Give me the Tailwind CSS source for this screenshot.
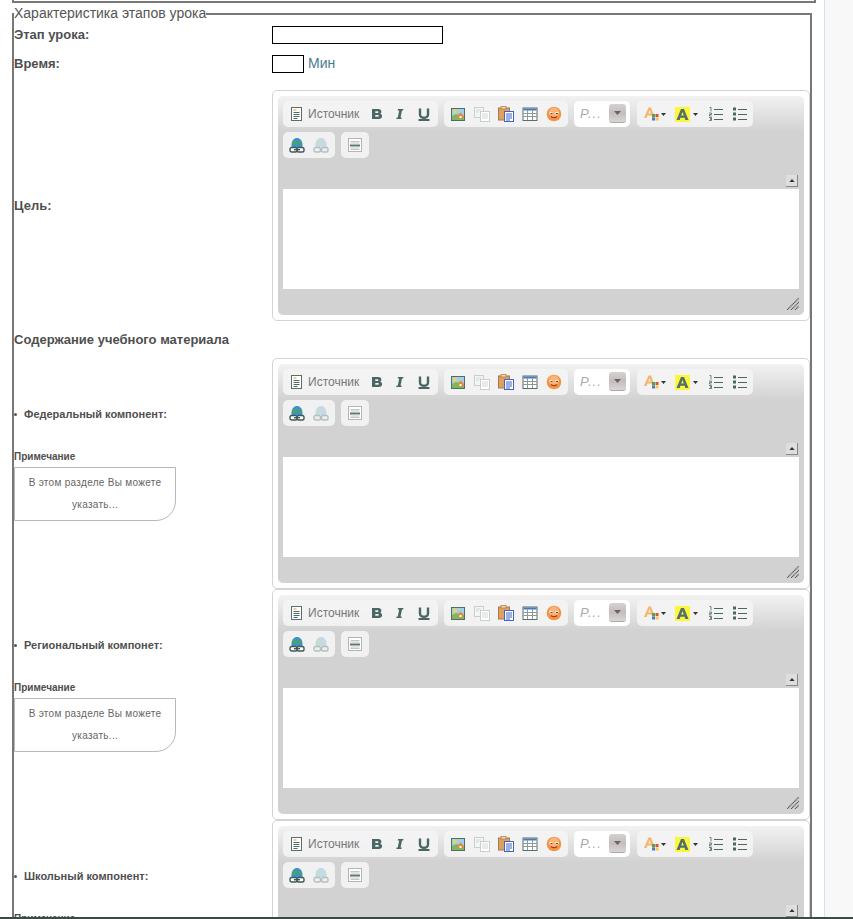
<!DOCTYPE html>
<html><head><meta charset="utf-8">
<script src="https://cdn.jsdelivr.net/npm/@tailwindcss/browser@4"></script>
</head>
<body class="bg-white overflow-hidden h-[919px] font-['Liberation_Sans',Arial,sans-serif] text-[#4f4f4f]">
<svg class="hidden" width="0" height="0">
<defs>
<symbol id="src" viewBox="0 0 16 16"><rect x="2.500" y="1.500" width="10" height="13" fill="#fff" stroke="#5a6e6a"/><path d="M4.500 4h3" stroke="#e8922e"/><path d="M4.500 6.500h6M4.500 8.500h6M4.500 10.500h6M4.500 12.500h4" stroke="#4d6b66"/></symbol>
<symbol id="bold" viewBox="0 0 14 14"><path d="M2 2h6.500c3.300 0 3.600 4 1.700 4.700 2.800 .6 2.700 5.300-1.400 5.300H2zM5.300 4.300v1.700h2.400c1 0 1-1.700 0-1.700zM5.300 8v1.800h2.700c1.200 0 1.200-1.800 0-1.800z" fill="#4a6763" fill-rule="evenodd"/></symbol>
<symbol id="ital" viewBox="0 0 14 14"><path d="M5 2h5.500l-.4 1.400H9L7.500 10.600h1.200L8.400 12H3.300l.3-1.400h1.200L6.200 3.400H4.700z" fill="#4a6763"/></symbol>
<symbol id="under" viewBox="0 0 14 14"><path d="M3 1.500v6c0 4.300 8 4.300 8 0v-6" fill="none" stroke="#4a6763" stroke-width="2.400"/><rect x="1.500" y="12" width="11" height="2" fill="#4a6763"/></symbol>
<symbol id="img" viewBox="0 0 16 16"><rect x="1" y="2" width="14" height="13" fill="#4e6e68"/><rect x="2" y="3" width="12" height="11" fill="#9fd0e8"/><circle cx="5" cy="5.500" r="2" fill="#f7d24a"/><path d="M2 10l4-2 8 2v4H2z" fill="#86b45a"/><path d="M8 9.500l2.500-3 3 3V12H8z" fill="#e8863a"/><rect x="9.500" y="10" width="2" height="2" fill="#fff"/></symbol>
<symbol id="copy" viewBox="0 0 16 16"><rect x=".5" y="1.500" width="9" height="10" fill="#f4f6f4" stroke="#c8cfcc"/><rect x="6.500" y="5.500" width="9" height="10" fill="#fff" stroke="#c8cfcc"/><path d="M2 4h5M2 6h3M8 8h6M8 10h6M8 12h6" stroke="#d2d8d6"/></symbol>
<symbol id="paste" viewBox="0 0 16 16"><rect x=".5" y="2" width="11" height="12" fill="#e0a060" stroke="#a87a4a"/><rect x="3" y=".5" width="5" height="2.500" fill="#f4d8a8" stroke="#a87a4a" stroke-width=".7"/><rect x="6.500" y="5.500" width="9" height="10" fill="#fff" stroke="#3d66c8"/><path d="M8 8h6M8 10h6M8 12h6M8 14h4" stroke="#3d66c8"/></symbol>
<symbol id="table" viewBox="0 0 16 16"><rect x="1" y="2" width="14" height="12.500" fill="#fff" stroke="#5a6e6a"/><rect x="1.500" y="2.500" width="13" height="2" fill="#4a78c0"/><path d="M1 7.500h14M1 10.500h14M5.500 4v10M10.500 4v10" stroke="#8a9a96"/></symbol>
<symbol id="smile" viewBox="0 0 16 16"><circle cx="8" cy="8" r="7.300" fill="#f39543"/><circle cx="8" cy="6.500" r="5" fill="#f8b47a"/><path d="M3.500 7h3M9.500 7h3" stroke="#fff" stroke-width="1.300"/><path d="M4.500 7.500h2M10 7.500h2" stroke="#7a4a20"/><path d="M5 10.500c1.500 1.500 4.500 1.500 6 0" stroke="#b83a1a" fill="none" stroke-width="1.300"/></symbol>
<symbol id="fcolor" viewBox="0 0 18 16"><path d="M1 12L5.500 1.500h2.500L12 12H9.500l-.8-2.400H4.500L3.500 12zM5.300 7.500h2.600L6.700 4z" fill="#f5b56a" fill-rule="evenodd"/><rect x="9" y="8" width="3" height="3" fill="#4aa84a"/><rect x="12.500" y="8" width="3" height="3" fill="#e84a3a"/><rect x="9" y="11.500" width="3" height="3" fill="#4a78d8"/><rect x="12.500" y="11.500" width="3" height="3" fill="#f5c842"/></symbol>
<symbol id="bcolor" viewBox="0 0 15 15"><rect width="15" height="15" fill="#fbf83c"/><path d="M1.500 13L6 2h3l4.500 11h-3.200l-.7-2.300H5.400L4.700 13zM6.200 8.500h2.600L7.500 5z" fill="#566f6b" fill-rule="evenodd"/></symbol>
<symbol id="ol" viewBox="0 0 16 16"><path d="M6 3.500h9M6 8.500h9M6 13.500h9" stroke="#4a6763"/><path d="M1.500 1.500h1.500v4M1 7h2.500v1.500H1.500V10h2M1 11.500h2.500v1.500H2h1.500v1.500H1" fill="none" stroke="#4a6763" stroke-width=".8"/></symbol>
<symbol id="ul" viewBox="0 0 16 16"><path d="M6 3.500h9M6 8.500h9M6 13.500h9" stroke="#4a6763"/><rect x="1" y="1.500" width="3" height="3" fill="#4a6763"/><rect x="1" y="6.500" width="3" height="3" fill="#4a6763"/><rect x="1" y="11.500" width="3" height="3" fill="#4a6763"/></symbol>
<symbol id="link" viewBox="0 0 16 16"><path d="M2.500 10C2 3.500 5 1 8 1s6 2.500 5.500 9z" fill="#3f8fd8"/><path d="M3.500 6c2-3 3.500-3.500 4.500-1.500S7 7.500 6 9zM10 3c2 1 3 3 2.500 5.500L10 7.500z" fill="#4aa84a"/><rect x="1" y="10.500" width="7" height="4.500" rx="1.800" fill="#fff" stroke="#3f5a56" stroke-width="1.400"/><rect x="8" y="10.500" width="7" height="4.500" rx="1.800" fill="#fff" stroke="#3f5a56" stroke-width="1.400"/><path d="M5 12.700h6" stroke="#3f5a56" stroke-width="1.400"/></symbol>
<symbol id="unlink" viewBox="0 0 16 16"><path d="M2.500 10C2 3.500 5 1 8 1s6 2.500 5.500 9z" fill="#c4d8ec"/><path d="M3.500 6c2-3 3.500-3.500 4.500-1.500S7 7.500 6 9zM10 3c2 1 3 3 2.500 5.500L10 7.500z" fill="#c6e0c8"/><rect x="1" y="10.500" width="6.500" height="4.500" rx="1.800" fill="#eee" stroke="#b4c0be" stroke-width="1.400"/><rect x="8.500" y="10.500" width="6.500" height="4.500" rx="1.800" fill="#eee" stroke="#b4c0be" stroke-width="1.400"/></symbol>
<symbol id="hr" viewBox="0 0 16 16"><rect x="1.500" y="1.500" width="13" height="13" fill="#fff" stroke="#b4b4b4"/><path d="M3.500 4.500h9M3.500 6h9M3.500 11h9M3.500 12.500h9" stroke="#c4c4c4"/><rect x="3" y="7.500" width="10" height="2" fill="#5f7773"/></symbol>
<symbol id="arrow" viewBox="0 0 7 4"><path d="M0 0h7L3.500 4z" fill="#333"/></symbol>
<symbol id="arrowg" viewBox="0 0 7 4"><path d="M0 0h7L3.500 4z" fill="#666"/></symbol>
<symbol id="grip" viewBox="0 0 12 12"><path d="M0 12L12 0M4 12L12 4M8 12L12 8" stroke="#555" stroke-width="1.200" stroke-dasharray="1.200 .5"/></symbol>
</defs>
</svg>

<div class="h-[3px] ml-[12px] w-[804px] border-b-2 border-x-2 border-[#777]"></div>
<div class="absolute right-0 top-0 bottom-0 w-[29px] bg-[#f8f8f8] border-l border-[#d5e3ee]"></div>

<fieldset class="relative ml-[12px] w-[799px] border-2 border-[#777] mt-[3px] pl-0 pr-0 h-[1100px]">
<legend class="relative -top-[1px] ml-0 px-0 text-[14px] leading-[16px] text-[#555]">Характеристика этапов урока</legend>

<div class="flex items-center h-[29px] -mt-[2px]">
<div class="w-[258px] text-[13px] font-bold">Этап урока:</div>
<div class="w-[171px] h-[18px] border border-black bg-white"></div>
</div>
<div class="flex items-center h-[29px]">
<div class="w-[258px] text-[13px] font-bold">Время:</div>
<div class="w-[32px] h-[18px] border border-black bg-white"></div>
<span class="ml-[4px] text-[14px] text-[#4a7a90]">Мин</span>
</div>

<div class="flex items-center h-[231px] mt-[12px]">
<div class="w-[258px] text-[13px] font-bold">Цель:</div>
<div class="w-[538px] h-[231px] border border-[#d4d4d4] rounded-[5px] p-[5px] bg-white">
<div class="h-[219px] rounded-[5px] bg-[#d2d2d2] bg-gradient-to-b from-[#f2f2f2] to-[#d2d2d2] bg-[length:100%_36px] bg-no-repeat relative flex flex-col">
<div class="h-[93px] px-[5px] pt-[5px] flex flex-wrap content-start gap-x-[6px] gap-y-[5px]">
<div class="h-[26px] w-[155px] bg-[#f4f4f4]/90 rounded-[5px] flex items-center pl-[6px]">
<svg class="w-[16px] h-[16px]"><use href="#src"/></svg>
<span class="ml-[3px] w-[54px] text-[12px] text-[#777]">Источник</span>
<svg class="ml-[8px] w-[14px] h-[14px]"><use href="#bold"/></svg>
<svg class="ml-[9px] w-[14px] h-[14px]"><use href="#ital"/></svg>
<svg class="ml-[10px] w-[14px] h-[14px]"><use href="#under"/></svg>
</div>
<div class="h-[26px] w-[124px] bg-[#f4f4f4]/90 rounded-[5px] flex items-center pl-[6px] gap-[8px]">
<svg class="w-[16px] h-[16px]"><use href="#img"/></svg><svg class="w-[16px] h-[16px]"><use href="#copy"/></svg><svg class="w-[16px] h-[16px]"><use href="#paste"/></svg><svg class="w-[16px] h-[16px]"><use href="#table"/></svg><svg class="w-[16px] h-[16px]"><use href="#smile"/></svg>
</div>
<div class="h-[26px] w-[56px] bg-white rounded-[5px] flex items-center pl-[6px] relative">
<span class="text-[13px] italic text-[#aaa] tracking-[1px]">P...</span>
<div class="absolute right-[4px] top-[3px] w-[17px] h-[19px] rounded-[3px] bg-gradient-to-b from-[#d6d2d2] via-[#c4bdbd] to-[#dad6d6] border-b border-[#aaa] flex items-center justify-center"><svg class="w-[7px] h-[4px]"><use href="#arrowg"/></svg></div>
</div>
<div class="h-[26px] w-[116px] ml-[1px] bg-[#f4f4f4]/90 rounded-[5px] flex items-center pl-[6px]">
<svg class="w-[18px] h-[16px]"><use href="#fcolor"/></svg>
<svg class="w-[5px] h-[3px]"><use href="#arrow"/></svg>
<svg class="ml-[9px] w-[15px] h-[15px]"><use href="#bcolor"/></svg>
<svg class="ml-[3px] w-[5px] h-[3px]"><use href="#arrow"/></svg>
<svg class="ml-[10px] w-[16px] h-[16px]"><use href="#ol"/></svg>
<svg class="ml-[8px] w-[16px] h-[16px]"><use href="#ul"/></svg>
</div>
<div class="h-[26px] w-[52px] bg-[#f4f4f4]/90 rounded-[5px] flex items-center pl-[6px] gap-[8px]">
<svg class="w-[16px] h-[16px]"><use href="#link"/></svg><svg class="w-[16px] h-[16px]"><use href="#unlink"/></svg>
</div>
<div class="h-[26px] w-[28px] bg-[#f4f4f4]/90 rounded-[5px] flex items-center justify-center">
<svg class="w-[16px] h-[16px]"><use href="#hr"/></svg>
</div>
</div>
<div class="absolute right-[6px] top-[79px] w-[12px] h-[12px] bg-[#dedede] border-r border-b border-[#888] flex items-center justify-center"><svg class="w-[6px] h-[3px] rotate-180"><use href="#arrow"/></svg></div>
<div class="mx-[5px] h-[100px] bg-white"></div>
<svg class="absolute right-[5px] bottom-[5px] w-[12px] h-[12px]"><use href="#grip"/></svg>
</div>
</div>
</div>

<div class="h-[37px] flex items-center text-[13px] font-bold">Содержание учебного материала</div>

<!-- Федеральный -->
<div class="flex h-[231px]">
<div class="w-[258px] pt-[48px]">
<div class="flex items-center h-[16px] text-[11px] font-bold"><span class="w-[3px] h-[3px] rounded-full bg-[#555] mr-[7px]"></span>Федеральный компонент:</div>
<div class="mt-[29px] text-[10px] font-bold leading-[12px]">Примечание</div>
<div class="mt-[4px] w-[162px] h-[54px] border border-[#b8b8b8] rounded-br-[20px] text-center text-[10px] tracking-[0.3px] leading-[22px] pt-[4px] text-[#666]">В этом разделе Вы можете<br>указать...</div>
</div>
<div class="w-[538px] h-[231px] border border-[#d4d4d4] rounded-[5px] p-[5px] bg-white">
<div class="h-[219px] rounded-[5px] bg-[#d2d2d2] bg-gradient-to-b from-[#f2f2f2] to-[#d2d2d2] bg-[length:100%_36px] bg-no-repeat relative flex flex-col">
<div class="h-[93px] px-[5px] pt-[5px] flex flex-wrap content-start gap-x-[6px] gap-y-[5px]">
<div class="h-[26px] w-[155px] bg-[#f4f4f4]/90 rounded-[5px] flex items-center pl-[6px]">
<svg class="w-[16px] h-[16px]"><use href="#src"/></svg>
<span class="ml-[3px] w-[54px] text-[12px] text-[#777]">Источник</span>
<svg class="ml-[8px] w-[14px] h-[14px]"><use href="#bold"/></svg>
<svg class="ml-[9px] w-[14px] h-[14px]"><use href="#ital"/></svg>
<svg class="ml-[10px] w-[14px] h-[14px]"><use href="#under"/></svg>
</div>
<div class="h-[26px] w-[124px] bg-[#f4f4f4]/90 rounded-[5px] flex items-center pl-[6px] gap-[8px]">
<svg class="w-[16px] h-[16px]"><use href="#img"/></svg><svg class="w-[16px] h-[16px]"><use href="#copy"/></svg><svg class="w-[16px] h-[16px]"><use href="#paste"/></svg><svg class="w-[16px] h-[16px]"><use href="#table"/></svg><svg class="w-[16px] h-[16px]"><use href="#smile"/></svg>
</div>
<div class="h-[26px] w-[56px] bg-white rounded-[5px] flex items-center pl-[6px] relative">
<span class="text-[13px] italic text-[#aaa] tracking-[1px]">P...</span>
<div class="absolute right-[4px] top-[3px] w-[17px] h-[19px] rounded-[3px] bg-gradient-to-b from-[#d6d2d2] via-[#c4bdbd] to-[#dad6d6] border-b border-[#aaa] flex items-center justify-center"><svg class="w-[7px] h-[4px]"><use href="#arrowg"/></svg></div>
</div>
<div class="h-[26px] w-[116px] ml-[1px] bg-[#f4f4f4]/90 rounded-[5px] flex items-center pl-[6px]">
<svg class="w-[18px] h-[16px]"><use href="#fcolor"/></svg>
<svg class="w-[5px] h-[3px]"><use href="#arrow"/></svg>
<svg class="ml-[9px] w-[15px] h-[15px]"><use href="#bcolor"/></svg>
<svg class="ml-[3px] w-[5px] h-[3px]"><use href="#arrow"/></svg>
<svg class="ml-[10px] w-[16px] h-[16px]"><use href="#ol"/></svg>
<svg class="ml-[8px] w-[16px] h-[16px]"><use href="#ul"/></svg>
</div>
<div class="h-[26px] w-[52px] bg-[#f4f4f4]/90 rounded-[5px] flex items-center pl-[6px] gap-[8px]">
<svg class="w-[16px] h-[16px]"><use href="#link"/></svg><svg class="w-[16px] h-[16px]"><use href="#unlink"/></svg>
</div>
<div class="h-[26px] w-[28px] bg-[#f4f4f4]/90 rounded-[5px] flex items-center justify-center">
<svg class="w-[16px] h-[16px]"><use href="#hr"/></svg>
</div>
</div>
<div class="absolute right-[6px] top-[79px] w-[12px] h-[12px] bg-[#dedede] border-r border-b border-[#888] flex items-center justify-center"><svg class="w-[6px] h-[3px] rotate-180"><use href="#arrow"/></svg></div>
<div class="mx-[5px] h-[100px] bg-white"></div>
<svg class="absolute right-[5px] bottom-[5px] w-[12px] h-[12px]"><use href="#grip"/></svg>
</div>
</div>
</div>

<!-- Региональный -->
<div class="flex h-[231px]">
<div class="w-[258px] pt-[48px]">
<div class="flex items-center h-[16px] text-[11px] font-bold"><span class="w-[3px] h-[3px] rounded-full bg-[#555] mr-[7px]"></span>Региональный компонет:</div>
<div class="mt-[29px] text-[10px] font-bold leading-[12px]">Примечание</div>
<div class="mt-[4px] w-[162px] h-[54px] border border-[#b8b8b8] rounded-br-[20px] text-center text-[10px] tracking-[0.3px] leading-[22px] pt-[4px] text-[#666]">В этом разделе Вы можете<br>указать...</div>
</div>
<div class="w-[538px] h-[231px] border border-[#d4d4d4] rounded-[5px] p-[5px] bg-white">
<div class="h-[219px] rounded-[5px] bg-[#d2d2d2] bg-gradient-to-b from-[#f2f2f2] to-[#d2d2d2] bg-[length:100%_36px] bg-no-repeat relative flex flex-col">
<div class="h-[93px] px-[5px] pt-[5px] flex flex-wrap content-start gap-x-[6px] gap-y-[5px]">
<div class="h-[26px] w-[155px] bg-[#f4f4f4]/90 rounded-[5px] flex items-center pl-[6px]">
<svg class="w-[16px] h-[16px]"><use href="#src"/></svg>
<span class="ml-[3px] w-[54px] text-[12px] text-[#777]">Источник</span>
<svg class="ml-[8px] w-[14px] h-[14px]"><use href="#bold"/></svg>
<svg class="ml-[9px] w-[14px] h-[14px]"><use href="#ital"/></svg>
<svg class="ml-[10px] w-[14px] h-[14px]"><use href="#under"/></svg>
</div>
<div class="h-[26px] w-[124px] bg-[#f4f4f4]/90 rounded-[5px] flex items-center pl-[6px] gap-[8px]">
<svg class="w-[16px] h-[16px]"><use href="#img"/></svg><svg class="w-[16px] h-[16px]"><use href="#copy"/></svg><svg class="w-[16px] h-[16px]"><use href="#paste"/></svg><svg class="w-[16px] h-[16px]"><use href="#table"/></svg><svg class="w-[16px] h-[16px]"><use href="#smile"/></svg>
</div>
<div class="h-[26px] w-[56px] bg-white rounded-[5px] flex items-center pl-[6px] relative">
<span class="text-[13px] italic text-[#aaa] tracking-[1px]">P...</span>
<div class="absolute right-[4px] top-[3px] w-[17px] h-[19px] rounded-[3px] bg-gradient-to-b from-[#d6d2d2] via-[#c4bdbd] to-[#dad6d6] border-b border-[#aaa] flex items-center justify-center"><svg class="w-[7px] h-[4px]"><use href="#arrowg"/></svg></div>
</div>
<div class="h-[26px] w-[116px] ml-[1px] bg-[#f4f4f4]/90 rounded-[5px] flex items-center pl-[6px]">
<svg class="w-[18px] h-[16px]"><use href="#fcolor"/></svg>
<svg class="w-[5px] h-[3px]"><use href="#arrow"/></svg>
<svg class="ml-[9px] w-[15px] h-[15px]"><use href="#bcolor"/></svg>
<svg class="ml-[3px] w-[5px] h-[3px]"><use href="#arrow"/></svg>
<svg class="ml-[10px] w-[16px] h-[16px]"><use href="#ol"/></svg>
<svg class="ml-[8px] w-[16px] h-[16px]"><use href="#ul"/></svg>
</div>
<div class="h-[26px] w-[52px] bg-[#f4f4f4]/90 rounded-[5px] flex items-center pl-[6px] gap-[8px]">
<svg class="w-[16px] h-[16px]"><use href="#link"/></svg><svg class="w-[16px] h-[16px]"><use href="#unlink"/></svg>
</div>
<div class="h-[26px] w-[28px] bg-[#f4f4f4]/90 rounded-[5px] flex items-center justify-center">
<svg class="w-[16px] h-[16px]"><use href="#hr"/></svg>
</div>
</div>
<div class="absolute right-[6px] top-[79px] w-[12px] h-[12px] bg-[#dedede] border-r border-b border-[#888] flex items-center justify-center"><svg class="w-[6px] h-[3px] rotate-180"><use href="#arrow"/></svg></div>
<div class="mx-[5px] h-[100px] bg-white"></div>
<svg class="absolute right-[5px] bottom-[5px] w-[12px] h-[12px]"><use href="#grip"/></svg>
</div>
</div>
</div>

<!-- Школьный -->
<div class="flex h-[231px]">
<div class="w-[258px] pt-[48px]">
<div class="flex items-center h-[16px] text-[11px] font-bold"><span class="w-[3px] h-[3px] rounded-full bg-[#555] mr-[7px]"></span>Школьный компонент:</div>
<div class="mt-[29px] text-[10px] font-bold leading-[12px]">Примечание</div>
<div class="mt-[4px] w-[162px] h-[54px] border border-[#b8b8b8] rounded-br-[20px] text-center text-[10px] tracking-[0.3px] leading-[22px] pt-[4px] text-[#666]">В этом разделе Вы можете<br>указать...</div>
</div>
<div class="w-[538px] h-[231px] border border-[#d4d4d4] rounded-[5px] p-[5px] bg-white">
<div class="h-[219px] rounded-[5px] bg-[#d2d2d2] bg-gradient-to-b from-[#f2f2f2] to-[#d2d2d2] bg-[length:100%_36px] bg-no-repeat relative flex flex-col">
<div class="h-[93px] px-[5px] pt-[5px] flex flex-wrap content-start gap-x-[6px] gap-y-[5px]">
<div class="h-[26px] w-[155px] bg-[#f4f4f4]/90 rounded-[5px] flex items-center pl-[6px]">
<svg class="w-[16px] h-[16px]"><use href="#src"/></svg>
<span class="ml-[3px] w-[54px] text-[12px] text-[#777]">Источник</span>
<svg class="ml-[8px] w-[14px] h-[14px]"><use href="#bold"/></svg>
<svg class="ml-[9px] w-[14px] h-[14px]"><use href="#ital"/></svg>
<svg class="ml-[10px] w-[14px] h-[14px]"><use href="#under"/></svg>
</div>
<div class="h-[26px] w-[124px] bg-[#f4f4f4]/90 rounded-[5px] flex items-center pl-[6px] gap-[8px]">
<svg class="w-[16px] h-[16px]"><use href="#img"/></svg><svg class="w-[16px] h-[16px]"><use href="#copy"/></svg><svg class="w-[16px] h-[16px]"><use href="#paste"/></svg><svg class="w-[16px] h-[16px]"><use href="#table"/></svg><svg class="w-[16px] h-[16px]"><use href="#smile"/></svg>
</div>
<div class="h-[26px] w-[56px] bg-white rounded-[5px] flex items-center pl-[6px] relative">
<span class="text-[13px] italic text-[#aaa] tracking-[1px]">P...</span>
<div class="absolute right-[4px] top-[3px] w-[17px] h-[19px] rounded-[3px] bg-gradient-to-b from-[#d6d2d2] via-[#c4bdbd] to-[#dad6d6] border-b border-[#aaa] flex items-center justify-center"><svg class="w-[7px] h-[4px]"><use href="#arrowg"/></svg></div>
</div>
<div class="h-[26px] w-[116px] ml-[1px] bg-[#f4f4f4]/90 rounded-[5px] flex items-center pl-[6px]">
<svg class="w-[18px] h-[16px]"><use href="#fcolor"/></svg>
<svg class="w-[5px] h-[3px]"><use href="#arrow"/></svg>
<svg class="ml-[9px] w-[15px] h-[15px]"><use href="#bcolor"/></svg>
<svg class="ml-[3px] w-[5px] h-[3px]"><use href="#arrow"/></svg>
<svg class="ml-[10px] w-[16px] h-[16px]"><use href="#ol"/></svg>
<svg class="ml-[8px] w-[16px] h-[16px]"><use href="#ul"/></svg>
</div>
<div class="h-[26px] w-[52px] bg-[#f4f4f4]/90 rounded-[5px] flex items-center pl-[6px] gap-[8px]">
<svg class="w-[16px] h-[16px]"><use href="#link"/></svg><svg class="w-[16px] h-[16px]"><use href="#unlink"/></svg>
</div>
<div class="h-[26px] w-[28px] bg-[#f4f4f4]/90 rounded-[5px] flex items-center justify-center">
<svg class="w-[16px] h-[16px]"><use href="#hr"/></svg>
</div>
</div>
<div class="absolute right-[6px] top-[79px] w-[12px] h-[12px] bg-[#dedede] border-r border-b border-[#888] flex items-center justify-center"><svg class="w-[6px] h-[3px] rotate-180"><use href="#arrow"/></svg></div>
<div class="mx-[5px] h-[100px] bg-white"></div>
</div>
</div>
</div>
</fieldset>
<div class="absolute left-0 right-0 top-[917px] h-[2px] bg-[#3a4a44]"></div>
</body></html>
